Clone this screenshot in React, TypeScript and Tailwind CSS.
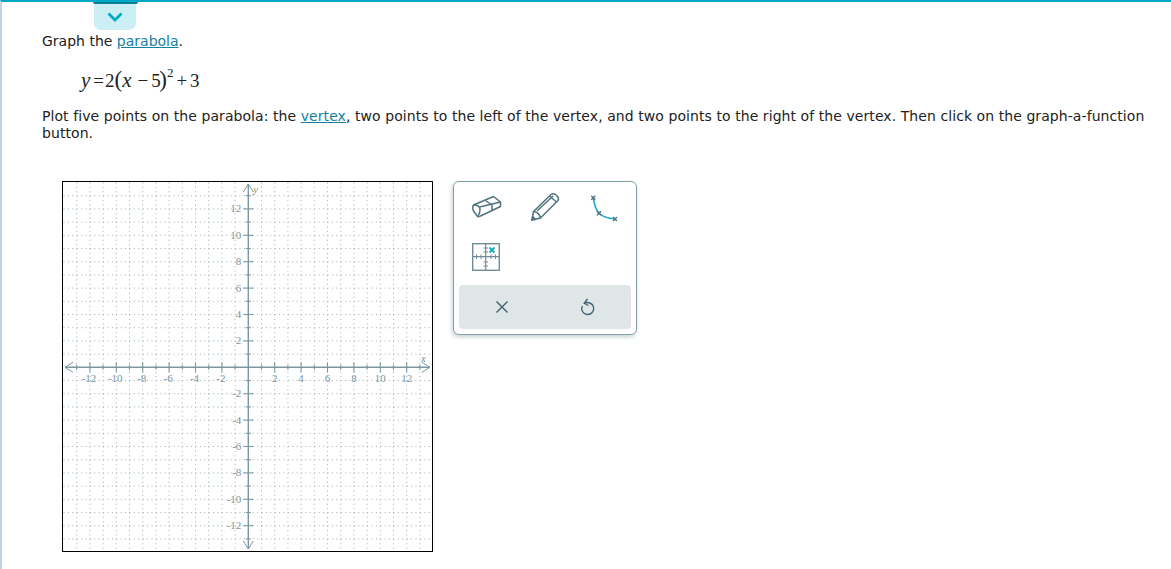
import React from 'react';

const UNIT = 13.2;
const OX = 185.3;
const OY = 185.3;
const START = OX - 14 * UNIT;
const range = [-13, -12, -11, -10, -9, -8, -7, -6, -5, -4, -3, -2, -1, 1, 2, 3, 4, 5, 6, 7, 8, 9, 10, 11, 12, 13];
const labels = [-12, -10, -8, -6, -4, -2, 2, 4, 6, 8, 10, 12];

const Graph: React.FC = () => (
  <div className="w-[371px] h-[371px] shrink-0 border border-black bg-white">
    <svg width="369" height="369" viewBox="0 0 369 369" className="block" style={{ fontFamily: '"Liberation Serif", serif' }}>
      {range.map((v) => (
        <g key={v} stroke="#98b1b8" strokeWidth="1" strokeDasharray="1 3.4">
          <line x1={OX + v * UNIT} y1={START} x2={OX + v * UNIT} y2="369" />
          <line x1={START} y1={OY - v * UNIT} x2="369" y2={OY - v * UNIT} />
        </g>
      ))}
      <g stroke="#7b979f" fill="none">
        <g strokeWidth="1.4">
          <line x1="2" y1={OY} x2="367" y2={OY} />
          <line x1={OX} y1="2" x2={OX} y2="367" />
        </g>
        <g strokeWidth="1">
          <path d={`M10 ${OY - 5} L2 ${OY} L10 ${OY + 5}`} />
          <path d={`M359 ${OY - 5} L367 ${OY} L359 ${OY + 5}`} />
          <path d={`M${OX - 5} 10 L${OX} 2 L${OX + 5} 10`} />
          <path d={`M${OX - 5} 359 L${OX} 367 L${OX + 5} 359`} />
        </g>
        <g strokeWidth="1.1">
          {range.map((v) => {
            const len = v % 2 === 0 ? 5 : 2.5;
            return (
              <g key={v}>
                <line x1={OX + v * UNIT} y1={OY - len} x2={OX + v * UNIT} y2={OY + len} />
                <line x1={OX - len} y1={OY - v * UNIT} x2={OX + len} y2={OY - v * UNIT} />
              </g>
            );
          })}
        </g>
      </g>
      <g fontSize="11" fill="#7f959c">
        {labels.map((v) => (
          <text key={v} x={OX + v * UNIT - (v < 0 ? 1 : 0)} y={OY + 15} textAnchor="middle">{v}</text>
        ))}
        {labels.map((v) => (
          <text key={v} x={OX - 7} y={OY - v * UNIT + 3.5} textAnchor="end">{v}</text>
        ))}
      </g>
      <text x={OX + 5} y="11" fontSize="11" fontStyle="italic" fill="#a08a78">y</text>
      <text x="358" y={OY - 5} fontSize="11" fontStyle="italic" fill="#7b8f99">x</text>
    </svg>
  </div>
);

const Eraser = () => (
  <svg className="mr-[2px]" width="30" height="24" viewBox="0 0 30 24" fill="none" stroke="#4f737d" strokeWidth="1.5" strokeLinejoin="round">
    <path d="M1.5 10 L21.5 1.5 L28.5 7 L28.5 11.5 L8.5 21 Q7 22 5.5 21.5 L1.5 16 Q0 12.5 1.5 10 Z" />
    <path d="M1.5 10 Q5.5 9.5 7.5 12 Q9 16 6 21.5" />
    <path d="M7.5 12 L28.5 7" />
    <path d="M13.5 5.5 L20 10 L20 15.5" />
  </svg>
);

const Pencil = () => (
  <svg width="30" height="30" viewBox="0 0 30 30" fill="none" stroke="#4f737d" strokeWidth="1.5" strokeLinejoin="round">
    <path d="M21 2.5 Q23.5 0.8 26 3 L27.5 4.5 Q29.5 7 27.5 9 L10.5 26 L2 28 L3.5 19.5 Z" />
    <path d="M3.5 19.5 Q9 20 10.5 26" />
    <path d="M7 19 L23 4" />
    <path d="M19.5 4 L26.5 10" />
    <path d="M2.6 24.5 L5.5 27.2 L2 28 Z" fill="#4f737d" />
  </svg>
);

const CurveTool = () => (
  <svg className="ml-[6px] mt-[4px]" width="30" height="30" viewBox="0 0 30 30" fill="none">
    <path d="M3.3 3.7 Q4.5 14 9 19.3 Q14 24 25 25" stroke="#14a9c4" strokeWidth="1.5" />
    <g stroke="#4f737d" strokeWidth="1.4">
      <path d="M1.3 1.7 L5.3 5.7 M5.3 1.7 L1.3 5.7" />
      <path d="M7 17.3 L11 21.3 M11 17.3 L7 21.3" />
      <path d="M23 23 L27 27 M27 23 L23 27" />
    </g>
  </svg>
);

const GridTool = () => (
  <svg className="mr-[3px]" width="28" height="28" viewBox="0 0 28 28" fill="none" stroke="#6f8d96">
    <rect x="0.7" y="0.7" width="26.6" height="26.6" strokeWidth="1.4" />
    <path d="M13.7 1 V27 M1 13.7 H27" strokeWidth="1.2" />
    <path d="M4.5 11.5 V16 M9 11.5 V16 M19 11.5 V16 M23.5 11.5 V16 M11.5 5 H16 M11.5 9 H16 M11.5 19 H16 M11.5 23 H16" strokeWidth="1" />
    <path d="M17.5 4.5 L22.5 9.5 M22.5 4.5 L17.5 9.5" stroke="#14a9c4" strokeWidth="1.8" />
  </svg>
);

const ToolPanel: React.FC = () => (
  <div className="ml-5 w-[184px] h-[154px] rounded-[6px] border border-[#86a0a8] bg-white px-[5px] shadow-[-1px_2px_4px_rgba(90,120,130,0.35)]">
    <div className="grid grid-cols-3 grid-rows-[50px_50px]">
      <div className="flex items-center justify-center"><Eraser /></div>
      <div className="flex items-center justify-center"><Pencil /></div>
      <div className="flex items-center justify-center"><CurveTool /></div>
      <div className="flex items-center justify-center"><GridTool /></div>
    </div>
    <div className="mt-[3px] h-[44px] rounded-[4px] bg-[#dfe6e8] grid grid-cols-2 items-center">
      <div className="flex justify-center">
        <svg width="14" height="14" viewBox="0 0 14 14" stroke="#3f5f69" strokeWidth="1.4"><path d="M1.5 1.5 L12.5 12.5 M12.5 1.5 L1.5 12.5" /></svg>
      </div>
      <div className="flex justify-center">
        <svg width="16" height="18" viewBox="0 0 16 18" fill="none" stroke="#3f6570" strokeWidth="1.4"><path d="M4.5 5.5 A6 6 0 1 1 2.3 8" /><path d="M7.5 1 L4.2 5.3 L8.5 7.5" /></svg>
      </div>
    </div>
  </div>
);

export default function App() {
  return (
    <div className="relative min-h-[569px] w-full overflow-hidden border-t-2 border-t-[#00a9c6] border-l-2 border-l-[#c4d3db] bg-white pl-10 text-[14px] leading-[17px] text-[#222]" style={{ fontFamily: '"DejaVu Sans", Verdana, sans-serif' }}>
      <div className="absolute left-[92px] top-0 w-[42px] h-[28px] flex flex-col items-center rounded-b-[7px] bg-[#cceff5]">
        <div className="w-[45px] h-[2px] shrink-0 rounded-b-[2px] bg-[#0e7f95]" />
        <svg className="mt-[8px]" width="16" height="11" viewBox="0 0 16 11" fill="none" stroke="#00a9c6" strokeWidth="2.8"><path d="M1.5 1.5 L8 8 L14.5 1.5" /></svg>
      </div>
      <p className="pt-[31px]">
        Graph the <a className="text-[#15809f] underline">parabola</a>.
      </p>
      <div className="pl-[39px] mt-[14px] h-[33px] flex items-baseline text-[19px] leading-[33px] text-[#222]" style={{ fontFamily: '"Liberation Serif", serif' }}>
        <i className="text-[21px]">y</i>
        <span className="ml-[3px]">=</span>
        <span className="ml-[1px]">2</span>
        <span className="text-[23px] leading-[0] font-light">(</span>
        <i className="text-[21px]">x</i>
        <span className="ml-[6px]">−</span>
        <span className="ml-[3px]">5</span>
        <span className="ml-[-1.5px] text-[23px] leading-[0] font-light">)</span>
        <span className="text-[13px] leading-[0] relative top-[-10px]">2</span>
        <span className="ml-[3px]">+</span>
        <span className="ml-[2.8px]">3</span>
      </div>
      <p className="mt-[11px] pr-[20px] tracking-[0.07px]">
        Plot five points on the parabola: the <a className="text-[#15809f] underline">vertex</a>, two points to the left of the vertex, and two points to the right of the vertex. Then click on the graph-a-function button.
      </p>
      <div className="mt-[39px] ml-[20px] flex items-start">
        <Graph />
        <ToolPanel />
      </div>
    </div>
  );
}
